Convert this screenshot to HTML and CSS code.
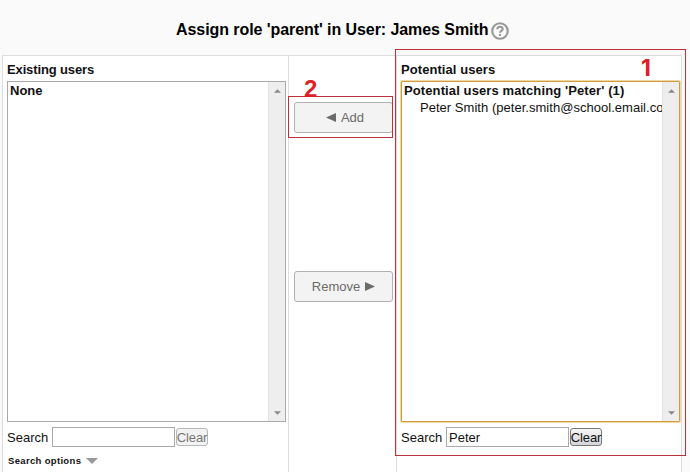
FILE: index.html
```html
<!DOCTYPE html>
<html lang="en">
<head>
<meta charset="utf-8">
<title>Assign role</title>
<link rel="stylesheet" href="styles.css">
</head>
<body>
<header class="heading">
  <h1>Assign role 'parent' in User: James Smith</h1>
  <svg class="help" viewBox="0 0 16 16"><circle cx="8" cy="8" r="6.9"/><path d="M5.6 6.5C5.6 3.5 10.4 3.5 10.4 6.2C10.4 7.8 8 7.8 8 9.6M8 10.7V12.4"/></svg>
</header>
<main class="assign">
  <section class="cell">
    <h2 class="existing">Existing users</h2>
    <div class="list">
      <div class="options"><strong class="none">None</strong></div>
      <div class="scrollbar"><svg viewBox="0 0 8 4"><path d="M0 4L4 0L8 4Z"/></svg><svg viewBox="0 0 8 4"><path d="M0 0H8L4 4Z"/></svg></div>
    </div>
    <div class="search"><label>Search</label><div class="field"></div><button class="clear muted" type="button"><span>Clear</span></button></div>
    <div class="more"><span>Search options</span><svg viewBox="0 0 12 6"><path d="M0 0H12L6 6Z"/></svg></div>
  </section>
  <section class="cell actions">
    <button class="action add" type="button"><svg viewBox="0 0 10 9"><path d="M10 0V9L0 4.5Z"/></svg><span>Add</span></button>
    <button class="action" type="button"><span class="remove">Remove</span><svg viewBox="0 0 10 9"><path d="M0 0V9L10 4.5Z"/></svg></button>
  </section>
  <section class="cell last">
    <h2 class="potential">Potential users</h2>
    <div class="list focused">
      <div class="options"><strong class="matching">Potential users matching 'Peter' (1)</strong><p>Peter Smith (peter.smith@school.email.co</p></div>
      <div class="scrollbar"><svg viewBox="0 0 8 4"><path d="M0 4L4 0L8 4Z"/></svg><svg viewBox="0 0 8 4"><path d="M0 0H8L4 4Z"/></svg></div>
    </div>
    <div class="search"><label>Search</label><div class="field">Peter</div><button class="clear" type="button"><span>Clear</span></button></div>
  </section>
</main>
<div class="callout first"><svg class="frame" viewBox="0 0 291 407"><rect x="0.5" y="0.5" width="290" height="406"/></svg><b>1</b></div>
<div class="callout second"><svg class="frame" viewBox="0 0 105 42"><rect x="0.5" y="0.5" width="104" height="41"/></svg><b>2</b></div>
</body>
</html>
```
FILE: styles.css
```css
* { box-sizing: border-box; }
body { margin: 0; height: 472px; overflow: hidden; position: relative; background: #fafafa; color: #111; font: 13px/17px "Liberation Sans", Arial, sans-serif; }
h1, h2, p { margin: 0; }
svg { display: block; flex: none; }
span, label, strong, h1, h2 { white-space: nowrap; }
.heading { height: 55px; padding: 20px 0 0 176px; display: flex; align-items: flex-start; }
h1 { width: 315px; font-size: 16px; line-height: 20px; color: #000; letter-spacing: -0.07px; }
.help { width: 18px; height: 18px; margin-top: 2px; fill: none; stroke: #999; stroke-width: 1.9; }
.assign { display: grid; grid-template-columns: 286px 108px 286px; height: 417px; margin-left: 2px; width: 680px; border-top: 1px solid #ddd; background: #fff; }
.cell { border-left: 1px solid #ddd; padding: 5px 0 0 4px; min-width: 0; }
.last { border-right: 1px solid #ddd; }
h2 { font-size: 13px; line-height: 17px; height: 20px; }
.existing { letter-spacing: -0.13px; }
.potential { letter-spacing: 0.07px; }
.matching { letter-spacing: 0.11px; }
.list { width: 279px; height: 341px; border: 1px solid #aaa; display: flex; }
.focused { border: 1px solid #d29c3a; box-shadow: 0 0 0 1px #ecd9a5; border-radius: 1px; }
.options { flex: 1; min-width: 0; overflow: hidden; padding-left: 2px; white-space: nowrap; }
.options strong { display: block; }
.options p { padding-left: 16px; letter-spacing: 0.03px; }
.scrollbar { width: 17px; background: #eee; border-left: 1px solid #e2e2e2; display: flex; flex-direction: column; justify-content: space-between; align-items: center; padding: 7px 0 6px; }
.scrollbar svg { width: 7px; height: 4px; fill: #888; }
.search { display: flex; height: 30px; padding-top: 5px; align-items: flex-start; }
label { width: 45px; line-height: 21px; }
.field { width: 123px; height: 20px; border: 1px solid #aaa; padding-left: 2px; line-height: 19px; }
.clear { width: 32px; height: 18px; margin: 1px 0 0 1px; padding: 0; border: 1px solid #777; border-radius: 3px; background: linear-gradient(#f6f6f6, #d4d4da); color: #111; font: inherit; line-height: 17px; letter-spacing: -0.1px; display: flex; justify-content: center; }
.muted { border-color: #b4b8bb; color: #777; background: #f3f3f3; }
.more { display: flex; align-items: center; height: 16px; padding-left: 1px; font-size: 9.5px; font-weight: bold; letter-spacing: 0.33px; }
.more span { width: 78px; }
.more svg { width: 12px; height: 6px; margin-top: 2px; fill: #999; }
.actions { padding: 46px 0 0 5px; }
.action { width: 99px; height: 31px; display: flex; align-items: center; justify-content: center; gap: 5px; padding: 0; border: 1px solid #aeb2b2; border-radius: 3px; background: #f3f3f3; color: #6b6b6b; font: inherit; }
.action svg { width: 10px; height: 9px; fill: #6b6b6b; }
.add { margin-bottom: 138px; padding-left: 3px; }
.callout { position: absolute; color: #df2026; }
.frame { width: 100%; height: 100%; fill: none; stroke: #c0303a; }
.callout b { position: absolute; font-size: 24px; line-height: 24px; }
.first { left: 395px; top: 49px; width: 291px; height: 407px; }
.first b { left: 246px; top: 7px; font-family: Inter, sans-serif; font-size: 23px; }
.second { left: 288px; top: 96px; width: 105px; height: 42px; }
.second b { left: 16px; top: -19px; }
```
